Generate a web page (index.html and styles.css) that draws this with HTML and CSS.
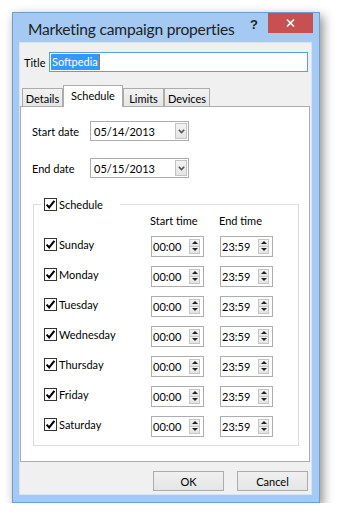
FILE: index.html
```html
<!DOCTYPE html>
<html>
<head>
<meta charset="utf-8">
<link rel="stylesheet" href="styles.css">
</head>
<body>
<div class="window">
  <div class="titlebar">
    <span class="caption">Marketing campaign properties</span>
    <span class="help">?</span>
    <span class="close"><svg width="9" height="8" viewBox="0 0 9 8"><path d="M1 0.5 L8 7.5 M8 0.5 L1 7.5" stroke="#fff" stroke-width="1.6" fill="none"/></svg></span>
  </div>
  <div class="client">
    <div class="title-row">
      <span class="lbl">Title</span>
      <div class="textbox"><span class="sel">Softpedia</span><span class="caret"></span></div>
    </div>
    <div class="tabs">
      <div class="tab t-details">Details</div>
      <div class="tab active t-schedule">Schedule</div>
      <div class="tab t-limits">Limits</div>
      <div class="tab t-devices">Devices</div>
    </div>
    <div class="panel">
      <div class="date-row">
        <span class="date-label">Start date</span>
        <div class="picker"><span class="pval">05/14/2013</span><span class="drop"><svg width="7" height="5" viewBox="0 0 7 5"><path d="M0.8 0.8 L3.5 3.6 L6.2 0.8" stroke="#555" stroke-width="1.6" fill="none"/></svg></span></div>
      </div>
      <div class="date-row second">
        <span class="date-label">End date</span>
        <div class="picker"><span class="pval">05/15/2013</span><span class="drop"><svg width="7" height="5" viewBox="0 0 7 5"><path d="M0.8 0.8 L3.5 3.6 L6.2 0.8" stroke="#555" stroke-width="1.6" fill="none"/></svg></span></div>
      </div>
      <fieldset class="group">
        <legend class="legend"><span class="chk"><svg width="11" height="11" viewBox="0 0 11 11"><path d="M1.6 5.6 L4.2 8.4 L9.4 1.8" stroke="#000" stroke-width="2.1" fill="none"/></svg></span><span class="ctext">Schedule</span></legend>
        <div class="sched">
          <span></span><span class="hdr">Start time</span><span class="hdr">End time</span>

          <label class="daychk"><span class="chk"><svg width="11" height="11" viewBox="0 0 11 11"><path d="M1.6 5.6 L4.2 8.4 L9.4 1.8" stroke="#000" stroke-width="2.1" fill="none"/></svg></span><span class="ctext">Sunday</span></label>
          <div class="spin"><span class="sval">00:00</span><span class="sbtns"><span class="sb up"></span><span class="sb down"></span></span></div>
          <div class="spin"><span class="sval">23:59</span><span class="sbtns"><span class="sb up"></span><span class="sb down"></span></span></div>

          <label class="daychk"><span class="chk"><svg width="11" height="11" viewBox="0 0 11 11"><path d="M1.6 5.6 L4.2 8.4 L9.4 1.8" stroke="#000" stroke-width="2.1" fill="none"/></svg></span><span class="ctext">Monday</span></label>
          <div class="spin"><span class="sval">00:00</span><span class="sbtns"><span class="sb up"></span><span class="sb down"></span></span></div>
          <div class="spin"><span class="sval">23:59</span><span class="sbtns"><span class="sb up"></span><span class="sb down"></span></span></div>

          <label class="daychk"><span class="chk"><svg width="11" height="11" viewBox="0 0 11 11"><path d="M1.6 5.6 L4.2 8.4 L9.4 1.8" stroke="#000" stroke-width="2.1" fill="none"/></svg></span><span class="ctext">Tuesday</span></label>
          <div class="spin"><span class="sval">00:00</span><span class="sbtns"><span class="sb up"></span><span class="sb down"></span></span></div>
          <div class="spin"><span class="sval">23:59</span><span class="sbtns"><span class="sb up"></span><span class="sb down"></span></span></div>

          <label class="daychk"><span class="chk"><svg width="11" height="11" viewBox="0 0 11 11"><path d="M1.6 5.6 L4.2 8.4 L9.4 1.8" stroke="#000" stroke-width="2.1" fill="none"/></svg></span><span class="ctext">Wednesday</span></label>
          <div class="spin"><span class="sval">00:00</span><span class="sbtns"><span class="sb up"></span><span class="sb down"></span></span></div>
          <div class="spin"><span class="sval">23:59</span><span class="sbtns"><span class="sb up"></span><span class="sb down"></span></span></div>

          <label class="daychk"><span class="chk"><svg width="11" height="11" viewBox="0 0 11 11"><path d="M1.6 5.6 L4.2 8.4 L9.4 1.8" stroke="#000" stroke-width="2.1" fill="none"/></svg></span><span class="ctext">Thursday</span></label>
          <div class="spin"><span class="sval">00:00</span><span class="sbtns"><span class="sb up"></span><span class="sb down"></span></span></div>
          <div class="spin"><span class="sval">23:59</span><span class="sbtns"><span class="sb up"></span><span class="sb down"></span></span></div>

          <label class="daychk"><span class="chk"><svg width="11" height="11" viewBox="0 0 11 11"><path d="M1.6 5.6 L4.2 8.4 L9.4 1.8" stroke="#000" stroke-width="2.1" fill="none"/></svg></span><span class="ctext">Friday</span></label>
          <div class="spin"><span class="sval">00:00</span><span class="sbtns"><span class="sb up"></span><span class="sb down"></span></span></div>
          <div class="spin"><span class="sval">23:59</span><span class="sbtns"><span class="sb up"></span><span class="sb down"></span></span></div>

          <label class="daychk"><span class="chk"><svg width="11" height="11" viewBox="0 0 11 11"><path d="M1.6 5.6 L4.2 8.4 L9.4 1.8" stroke="#000" stroke-width="2.1" fill="none"/></svg></span><span class="ctext">Saturday</span></label>
          <div class="spin"><span class="sval">00:00</span><span class="sbtns"><span class="sb up"></span><span class="sb down"></span></span></div>
          <div class="spin"><span class="sval">23:59</span><span class="sbtns"><span class="sb up"></span><span class="sb down"></span></span></div>
        </div>
      </fieldset>
    </div>
    <div class="buttons">
      <div class="btn">OK</div>
      <div class="btn">Cancel</div>
    </div>
  </div>
</div>
</body>
</html>
```

FILE: styles.css
```css
* { box-sizing: border-box; }
html, body { margin: 0; padding: 0; background: #fff; }
body {
  font-family: Lato, "Noto Sans", sans-serif;
  font-size: 11px;
  color: #000;
}

.window {
  margin: 12px 0 0 12px;
  width: 308px;
  height: 491px;
  border: 1px solid #6e9dd0;
  background: #a4c9f2;
  padding: 0 7px 7px 6px;
  display: flex;
  flex-direction: column;
  box-shadow: 3px 4px 10px rgba(0, 0, 0, 0.45);
}

.titlebar {
  height: 29px;
  display: flex;
  align-items: flex-start;
  margin-right: -1px;
}
.caption {
  flex: 1;
  font-size: 15.6px;
  letter-spacing: -0.2px;
  line-height: 20px;
  margin: 6px 0 0 9px;
  color: #222;
  white-space: nowrap;
}
.help {
  font-family: "Liberation Sans", sans-serif;
  font-weight: bold;
  font-size: 13px;
  line-height: 14px;
  margin: 5px 10px 0 0;
  color: #222;
}
.close {
  width: 45px;
  height: 20px;
  background: #c75050;
  display: flex;
  align-items: center;
  justify-content: center;
}

.client {
  flex: 1;
  background: #f0f0f0;
  display: flex;
  flex-direction: column;
  box-shadow: inset 0 0 0 1px #d3e4f7;
}

.title-row {
  display: flex;
  align-items: center;
  height: 20px;
  margin-top: 10px;
  padding: 0 4px 0 5px;
}
.title-row .lbl { width: 25px; }
.textbox {
  flex: 1;
  height: 20px;
  border: 1px solid #5b9de3;
  background: #fff;
  padding: 1px 0 1px 1px;
  display: flex;
}
.sel {
  background: #3399ff;
  color: #fff;
  padding: 0 1px;
  line-height: 16px;
}
.caret { width: 1px; height: 16px; background: #c46a1c; }

.tabs {
  display: flex;
  align-items: flex-end;
  height: 21px;
  margin-top: 13px;
  padding-left: 3px;
  position: relative;
  z-index: 1;
}
.tab {
  height: 18px;
  border: 1px solid #acacac;
  border-bottom: none;
  background: linear-gradient(#f2f2f2, #e6e6e6);
  display: flex;
  align-items: center;
  justify-content: center;
  padding-top: 1px;
}
.tab.active {
  height: 22px;
  margin-bottom: -1px;
  background: #fff;
  padding-top: 0;
  padding-bottom: 3px;
}
.t-details { width: 41px; }
.t-schedule { width: 60px; }
.t-limits { width: 41px; }
.t-devices { width: 46px; }

.panel {
  height: 356px;
  margin: 0 2px 0 1px;
  border: 1px solid #acacac;
  background: #fff;
  padding: 14px 0 0 11px;
  display: flex;
  flex-direction: column;
}

.date-row {
  display: flex;
  align-items: center;
  height: 20px;
}
.date-row.second { margin-top: 17px; }
.date-label { width: 58px; }
.picker {
  width: 99px;
  height: 20px;
  border: 1px solid #abadb3;
  display: flex;
  align-items: center;
  padding: 1px 1px 1px 3px;
}
.pval { flex: 1; }
.drop {
  width: 12px;
  height: 16px;
  border: 1px solid #c3c3c3;
  background: linear-gradient(#f3f3f3, #e4e4e4);
  display: flex;
  align-items: center;
  justify-content: center;
}

.group {
  margin: 20px 0 0 1px;
  width: 266px;
  border: 1px solid #dcdcdc;
  padding: 2px 0 4px 10px;
  min-width: 0;
}
.legend {
  margin-left: -3px;
  padding: 0 0 0 3px;
  width: 79px;
  height: 13px;
  display: flex;
  align-items: center;
}
.chk {
  width: 13px;
  height: 13px;
  border: 1px solid #333;
  background: #fff;
  display: flex;
  flex: none;
}
.ctext { margin-left: 2px; line-height: 13px; }

.sched {
  display: grid;
  grid-template-columns: 107px 69px 53px;
  grid-template-rows: 18px repeat(7, 30px);
  align-items: center;
}
.hdr {
  align-self: start;
  line-height: 16px;
  margin-left: -1px;
}
.daychk {
  display: flex;
  align-items: center;
  margin-bottom: 4px;
}
.spin {
  width: 53px;
  height: 21px;
  border: 1px solid #abadb3;
  background: #fff;
  display: flex;
  align-items: flex-start;
  padding: 1px 3px 0 1px;
}
.sval { line-height: 18px; }
.sbtns {
  margin-left: auto;
  margin-top: 1px;
  width: 11px;
  height: 15px;
  display: flex;
  flex-direction: column;
}
.sb {
  flex: 1;
  border: 1px solid #c6c6c6;
  background: linear-gradient(#f4f4f4, #e3e3e3);
  display: flex;
  align-items: center;
  justify-content: center;
}
.sb.down { margin-top: -1px; }
.sb::after {
  content: "";
  width: 0;
  height: 0;
  border-left: 3px solid transparent;
  border-right: 3px solid transparent;
}
.sb.up::after { border-bottom: 3px solid #222; }
.sb.down::after { border-top: 3px solid #222; }

.buttons {
  display: flex;
  justify-content: flex-end;
  gap: 13px;
  margin-top: 9px;
  padding-right: 4px;
}
.btn {
  width: 71px;
  height: 20px;
  border: 1px solid #acacac;
  background: linear-gradient(#f0f0f0, #e5e5e5);
  display: flex;
  align-items: center;
  justify-content: center;
}
```
